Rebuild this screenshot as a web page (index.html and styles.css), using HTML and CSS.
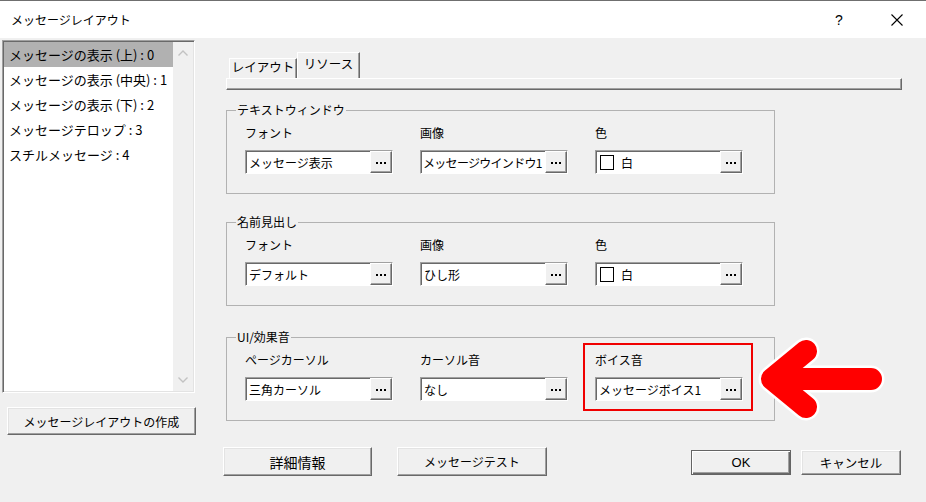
FILE: index.html
```html
<!DOCTYPE html>
<html lang="ja">
<head>
<meta charset="utf-8">
<title>メッセージレイアウト</title>
<link rel="stylesheet" href="styles.css">
</head>
<body>
<div class="window">
  <header class="titlebar">
    <span class="title">メッセージレイアウト</span>
    <span class="tb-help">?</span>
    <span class="tb-close">
      <svg width="12" height="12" viewBox="0 0 12 12"><path d="M0.5 0.5 L11.5 11.5 M11.5 0.5 L0.5 11.5" stroke="#000" stroke-width="1.1" fill="none"/></svg>
    </span>
  </header>
  <div class="main">
    <aside class="left">
      <div class="listbox">
        <ul class="items">
          <li class="sel">メッセージの表示 (上) : 0</li>
          <li>メッセージの表示 (中央) : 1</li>
          <li>メッセージの表示 (下) : 2</li>
          <li>メッセージテロップ : 3</li>
          <li>スチルメッセージ : 4</li>
        </ul>
        <div class="vscroll">
          <svg width="10" height="6" viewBox="0 0 10 6"><path d="M0.5 5.5 L5 1 L9.5 5.5" stroke="#c2c2c2" stroke-width="1.4" fill="none"/></svg>
          <svg width="10" height="6" viewBox="0 0 10 6"><path d="M0.5 0.5 L5 5 L9.5 0.5" stroke="#c2c2c2" stroke-width="1.4" fill="none"/></svg>
        </div>
      </div>
      <button class="btn create">メッセージレイアウトの作成</button>
    </aside>
    <section class="right">
      <div class="tabs">
        <div class="tab">レイアウト</div>
        <div class="tab active">リソース</div>
      </div>
      <div class="tabstrip"></div>

      <fieldset class="group g1">
        <legend>テキストウィンドウ</legend>
        <div class="cols">
          <div class="col">
            <div class="lbl">フォント</div>
            <div class="field"><span class="edit">メッセージ表示</span><span class="more"><i></i><i></i><i></i></span></div>
          </div>
          <div class="col">
            <div class="lbl">画像</div>
            <div class="field"><span class="edit tight">メッセージウインドウ1</span><span class="more"><i></i><i></i><i></i></span></div>
          </div>
          <div class="col">
            <div class="lbl">色</div>
            <div class="field"><span class="edit"><b class="swatch"></b>白</span><span class="more"><i></i><i></i><i></i></span></div>
          </div>
        </div>
      </fieldset>

      <fieldset class="group g2">
        <legend>名前見出し</legend>
        <div class="cols">
          <div class="col">
            <div class="lbl">フォント</div>
            <div class="field"><span class="edit">デフォルト</span><span class="more"><i></i><i></i><i></i></span></div>
          </div>
          <div class="col">
            <div class="lbl">画像</div>
            <div class="field"><span class="edit">ひし形</span><span class="more"><i></i><i></i><i></i></span></div>
          </div>
          <div class="col">
            <div class="lbl">色</div>
            <div class="field"><span class="edit"><b class="swatch"></b>白</span><span class="more"><i></i><i></i><i></i></span></div>
          </div>
        </div>
      </fieldset>

      <fieldset class="group g3">
        <legend>UI/効果音</legend>
        <div class="cols">
          <div class="col">
            <div class="lbl">ページカーソル</div>
            <div class="field"><span class="edit">三角カーソル</span><span class="more"><i></i><i></i><i></i></span></div>
          </div>
          <div class="col">
            <div class="lbl">カーソル音</div>
            <div class="field"><span class="edit">なし</span><span class="more"><i></i><i></i><i></i></span></div>
          </div>
          <div class="col">
            <div class="lbl">ボイス音</div>
            <div class="field"><span class="edit">メッセージボイス1</span><span class="more"><i></i><i></i><i></i></span></div>
          </div>
        </div>
      </fieldset>

      <div class="actions">
        <button class="btn wide big">詳細情報</button>
        <button class="btn wide test">メッセージテスト</button>
        <button class="btn small ok">OK</button>
        <button class="btn small cancel">キャンセル</button>
      </div>
    </section>
  </div>

  <div class="highlight"></div>
  <svg class="arrow" width="140" height="100" viewBox="0 0 140 100">
    <path d="M56 21 L22 49 L56 77 M22 49 L121 49" stroke="#fff" stroke-width="27" stroke-linecap="round" stroke-linejoin="round" fill="none"/>
    <path d="M56 21 L22 49 L56 77 M22 49 L121 49" stroke="#ff0000" stroke-width="22" stroke-linecap="round" stroke-linejoin="round" fill="none"/>
  </svg>
</div>
</body>
</html>
```
FILE: styles.css
```css
* { box-sizing: border-box; }
html, body { margin: 0; padding: 0; }
body {
  width: 926px;
  height: 502px;
  overflow: hidden;
  background: #f0f0f0;
  font-family: "Noto Sans CJK JP", "Noto Sans", sans-serif;
  font-size: 12px;
  color: #000;
}
.window {
  position: relative;
  width: 926px;
  height: 502px;
  display: flex;
  flex-direction: column;
}
.titlebar {
  height: 38px;
  flex: none;
  background: #fff;
  border-top: 1px solid #6f6f6f;
  display: flex;
  align-items: center;
}
.title { margin-left: 11px; flex: 1; font-size: 12px; line-height: 16px; }
.tb-help {
  width: 20px;
  text-align: center;
  font-size: 14px;
  line-height: 16px;
  font-family: "Liberation Sans", sans-serif;
}
.tb-close {
  width: 20px;
  margin-left: 38px;
  margin-right: 19px;
  display: flex;
  justify-content: center;
}

.main { flex: 1; display: flex; }

.left { width: 196px; flex: none; padding: 2px 0 0 2px; }
.listbox {
  width: 193px;
  height: 353px;
  display: flex;
  background: #fff;
  border: 1px solid;
  border-color: #a0a0a0 #fff #fff #a0a0a0;
  box-shadow: inset 1px 1px #696969, inset -1px -1px #e3e3e3;
  padding: 1px;
}
.items { list-style: none; margin: 0; padding: 0; flex: 1; }
.items li {
  height: 25px;
  line-height: 25px;
  padding-left: 5px;
  font-size: 13px;
  white-space: nowrap;
  overflow: hidden;
}
.items li.sel { background: #b1b1b1; }
.vscroll {
  width: 20px;
  background: #f0f0f0;
  display: flex;
  flex-direction: column;
  justify-content: space-between;
  align-items: center;
  padding: 8px 0 8px;
}

.btn {
  font-family: inherit;
  font-size: 12px;
  color: #000;
  background: #f0f0f0;
  border: 1px solid;
  border-color: #fff #696969 #696969 #fff;
  box-shadow: inset -1px -1px #a0a0a0, inset 1px 1px #e3e3e3;
  padding: 0;
  display: flex;
  align-items: center;
  justify-content: center;
}
.create { width: 189px; height: 28px; margin: 14px 0 0 5px; }

.right { flex: 1; padding-left: 27px; display: flex; flex-direction: column; align-items: flex-start; }
.tabs { display: flex; align-items: flex-end; height: 26px; margin: 14px 0 0 6px; }
.tab {
  width: 68px;
  height: 20px;
  line-height: 16px;
  text-align: center;
  border-top: 1px solid #fff;
  border-left: 1px solid #fff;
  border-right: 1px solid #696969;
  box-shadow: inset -1px 0 #a0a0a0;
  font-size: 12.5px;
}
.tab.active {
  width: 63px;
  height: 26px;
  line-height: 18px;
  padding-top: 2px;
}
.tabstrip {
  width: 676px;
  height: 12px;
  margin-left: 3px;
  border: 1px solid;
  border-color: #fff #696969 #696969 #fff;
  box-shadow: inset -1px -1px #a0a0a0;
}

.group {
  width: 549px;
  height: 91px;
  margin: 0 0 0 3px;
  padding: 0;
  border: 1px solid #b2b2b2;
  min-inline-size: 0;
}
.g1 { margin-top: 13px; }
.g2 { margin-top: 21px; }
.g3 { margin-top: 24px; }
.group legend {
  padding: 0 1px;
  margin-left: 9px;
  line-height: 14px;
  font-size: 12px;
}
.cols {
  display: grid;
  grid-template-columns: repeat(3, 148px);
  column-gap: 27px;
  padding: 9px 0 0 18px;
}
.lbl { line-height: 14px; height: 14px; white-space: nowrap; }
.field {
  margin-top: 10px;
  height: 24px;
  display: flex;
  border: 1px solid;
  border-color: #a0a0a0 #fff #fff #a0a0a0;
}
.edit {
  flex: 1;
  min-width: 0;
  background: #fff;
  border-top: 1px solid #696969;
  border-left: 1px solid #696969;
  padding-left: 2px;
  line-height: 20px;
  white-space: nowrap;
  overflow: hidden;
  display: flex;
  align-items: center;
}
.edit.tight { letter-spacing: -0.7px; padding-left: 1px; }
.more {
  width: 22px;
  flex: none;
  background: #f0f0f0;
  border: 1px solid;
  border-color: #fff #696969 #696969 #fff;
  box-shadow: inset -1px -1px #a0a0a0;
  display: flex;
  justify-content: center;
  align-items: center;
  gap: 2px;
  padding-top: 2px;
}
.more i { width: 2px; height: 2px; background: #000; display: block; }
.swatch {
  display: inline-block;
  width: 14px;
  height: 15px;
  border: 1px solid #000;
  background: #fff;
  margin: 0 7px 0 1px;
}

.actions { display: flex; align-items: flex-start; margin-top: 26px; }
.wide { width: 149px; height: 29px; }
.big { font-size: 14px; }
.test { width: 150px; margin-left: 25px; font-size: 12px; }
.small { width: 100px; height: 25px; margin-top: 3px; font-size: 12.5px; }
.ok {
  margin-left: 144px;
  border: 1px solid #646464;
  box-shadow: inset 1px 1px #fff, inset -1px -1px #696969, inset -2px -2px #a0a0a0;
  font-family: "Liberation Sans", sans-serif;
  font-size: 13px;
}
.cancel { margin-left: 10px; }

.highlight {
  position: absolute;
  left: 583px;
  top: 343px;
  width: 170px;
  height: 68px;
  border: 2px solid #f00000;
}
.arrow { position: absolute; left: 750px; top: 330px; }
```
